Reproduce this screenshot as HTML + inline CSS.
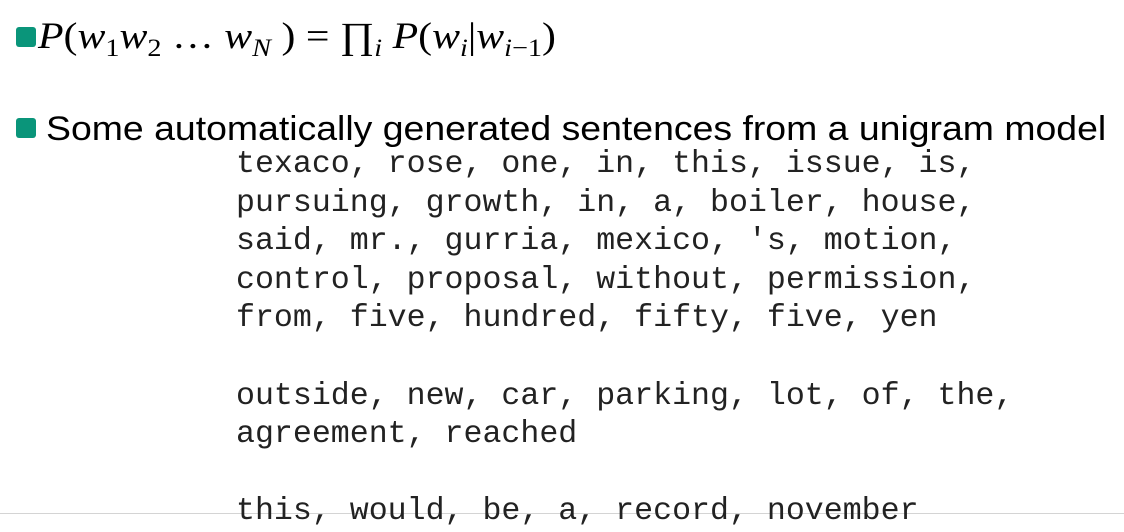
<!DOCTYPE html>
<html><head><style>
html,body{margin:0;width:1124px;height:532px;overflow:hidden}
body{background:#fff;position:relative;font-family:"Liberation Sans",sans-serif;color:#000}
.b{position:absolute;width:20px;height:20px;background:#0a957a;border-radius:3px}
.m{position:absolute;left:38px;top:12px;font-family:"Liberation Serif",serif;font-size:37px;white-space:nowrap;line-height:50px;transform:scaleX(1.13);transform-origin:0 0}
.m i{font-style:italic}
.m sub{font-size:25px;vertical-align:-8px;line-height:0}
.t{position:absolute;left:46px;top:107px;font-size:34px;line-height:44px;white-space:nowrap;transform:scaleX(1.1);transform-origin:0 0}
pre{position:absolute;left:236px;top:146px;margin:0;font-family:"Liberation Mono",monospace;font-size:31.6px;line-height:38.6px;color:#222}
.ln{position:absolute;left:0;top:513px;width:1124px;height:1px;background:#d4d4d4}
</style></head><body>
<div class="ln"></div>
<div class="b" style="left:16px;top:27px"></div>
<div class="m"><i>P</i>(<i>w</i><sub>1</sub><i>w</i><sub>2</sub> … <i>w</i><sub><i>N</i></sub> ) = ∏<sub><i>i</i></sub> <i>P</i>(<i>w</i><sub><i>i</i></sub>|<i>w</i><sub><i>i</i>−1</sub>)</div>
<div class="b" style="left:16px;top:118px"></div>
<div class="t">Some automatically generated sentences from a unigram model</div>
<pre>texaco, rose, one, in, this, issue, is,
pursuing, growth, in, a, boiler, house,
said, mr., gurria, mexico, 's, motion,
control, proposal, without, permission,
from, five, hundred, fifty, five, yen

outside, new, car, parking, lot, of, the,
agreement, reached

this, would, be, a, record, november</pre>
</body></html>
